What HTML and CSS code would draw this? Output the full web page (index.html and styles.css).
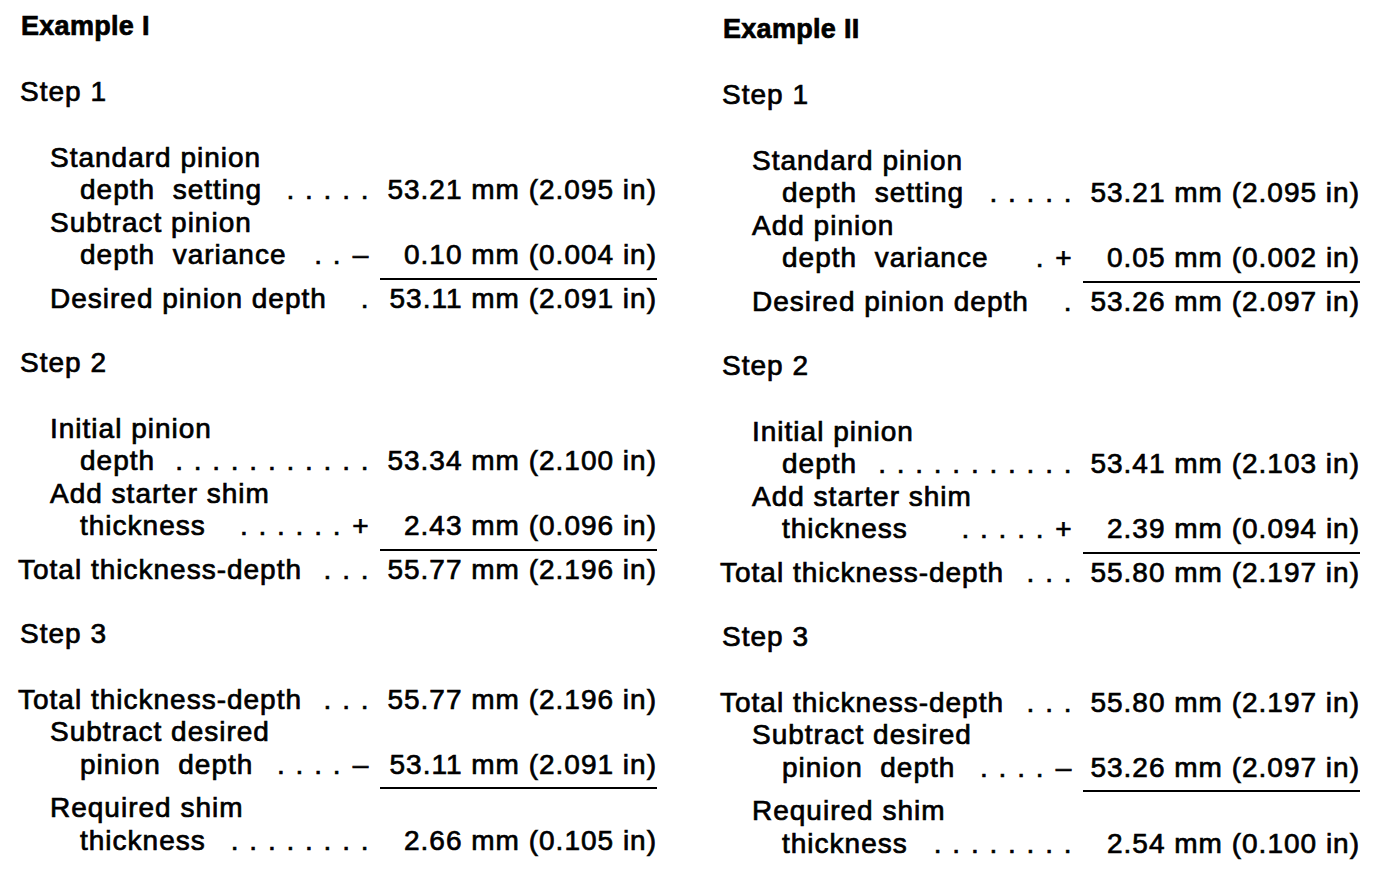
FILE: index.html
```html
<!DOCTYPE html>
<html lang="en">
<head>
<meta charset="utf-8">
<title>Pinion depth examples</title>
<link rel="stylesheet" href="styles.css">
</head>
<body>
<main class="page">
  <section class="example">
    <h1 class="ex-title">Example I</h1>

    <div class="step">
      <h2 class="step-title">Step 1</h2>
      <div class="row"><span class="label i1">Standard pinion</span></div>
      <div class="row"><span class="label span i2"><span class="txt">depth&nbsp; setting</span><span class="dots">. . . . .</span></span><span class="val">53.21 mm (2.095 in)</span></div>
      <div class="row"><span class="label i1">Subtract pinion</span></div>
      <div class="row ruled"><span class="label i2"><span class="txt">depth&nbsp; variance</span><span class="dots">. .</span></span><span class="op">–</span><span class="val">0.10 mm (0.004 in)</span></div>
      <div class="row"><span class="label span i1"><span class="txt">Desired pinion depth</span><span class="dots">.</span></span><span class="val">53.11 mm (2.091 in)</span></div>
    </div>

    <div class="step">
      <h2 class="step-title">Step 2</h2>
      <div class="row"><span class="label i1">Initial pinion</span></div>
      <div class="row"><span class="label span i2"><span class="txt">depth</span><span class="dots">. . . . . . . . . . .</span></span><span class="val">53.34 mm (2.100 in)</span></div>
      <div class="row"><span class="label i1">Add starter shim</span></div>
      <div class="row ruled"><span class="label i2"><span class="txt">thickness</span><span class="dots">. . . . . .</span></span><span class="op">+</span><span class="val">2.43 mm (0.096 in)</span></div>
      <div class="row"><span class="label span"><span class="txt">Total thickness-depth</span><span class="dots">. . .</span></span><span class="val">55.77 mm (2.196 in)</span></div>
    </div>

    <div class="step">
      <h2 class="step-title">Step 3</h2>
      <div class="row"><span class="label span"><span class="txt">Total thickness-depth</span><span class="dots">. . .</span></span><span class="val">55.77 mm (2.196 in)</span></div>
      <div class="row"><span class="label i1">Subtract desired</span></div>
      <div class="row ruled"><span class="label i2"><span class="txt">pinion&nbsp; depth</span><span class="dots">. . . .</span></span><span class="op">–</span><span class="val">53.11 mm (2.091 in)</span></div>
      <div class="row"><span class="label i1">Required shim</span></div>
      <div class="row"><span class="label span i2"><span class="txt">thickness</span><span class="dots">. . . . . . . .</span></span><span class="val">2.66 mm (0.105 in)</span></div>
    </div>
  </section>

  <section class="example second">
    <h1 class="ex-title">Example II</h1>

    <div class="step">
      <h2 class="step-title">Step 1</h2>
      <div class="row"><span class="label i1">Standard pinion</span></div>
      <div class="row"><span class="label span i2"><span class="txt">depth&nbsp; setting</span><span class="dots">. . . . .</span></span><span class="val">53.21 mm (2.095 in)</span></div>
      <div class="row"><span class="label i1">Add pinion</span></div>
      <div class="row ruled"><span class="label i2"><span class="txt">depth&nbsp; variance</span><span class="dots">.</span></span><span class="op">+</span><span class="val">0.05 mm (0.002 in)</span></div>
      <div class="row"><span class="label span i1"><span class="txt">Desired pinion depth</span><span class="dots">.</span></span><span class="val">53.26 mm (2.097 in)</span></div>
    </div>

    <div class="step">
      <h2 class="step-title">Step 2</h2>
      <div class="row"><span class="label i1">Initial pinion</span></div>
      <div class="row"><span class="label span i2"><span class="txt">depth</span><span class="dots">. . . . . . . . . . .</span></span><span class="val">53.41 mm (2.103 in)</span></div>
      <div class="row"><span class="label i1">Add starter shim</span></div>
      <div class="row ruled"><span class="label i2"><span class="txt">thickness</span><span class="dots">. . . . .</span></span><span class="op">+</span><span class="val">2.39 mm (0.094 in)</span></div>
      <div class="row"><span class="label span"><span class="txt">Total thickness-depth</span><span class="dots">. . .</span></span><span class="val">55.80 mm (2.197 in)</span></div>
    </div>

    <div class="step">
      <h2 class="step-title">Step 3</h2>
      <div class="row"><span class="label span"><span class="txt">Total thickness-depth</span><span class="dots">. . .</span></span><span class="val">55.80 mm (2.197 in)</span></div>
      <div class="row"><span class="label i1">Subtract desired</span></div>
      <div class="row ruled"><span class="label i2"><span class="txt">pinion&nbsp; depth</span><span class="dots">. . . .</span></span><span class="op">–</span><span class="val">53.26 mm (2.097 in)</span></div>
      <div class="row"><span class="label i1">Required shim</span></div>
      <div class="row"><span class="label span i2"><span class="txt">thickness</span><span class="dots">. . . . . . . .</span></span><span class="val">2.54 mm (0.100 in)</span></div>
    </div>
  </section>
</main>
</body>
</html>
```

FILE: styles.css
```css
html, body {
  margin: 0;
  padding: 0;
  background: #ffffff;
}

body {
  color: #000000;
  font-family: "Liberation Sans", Arial, Helvetica, sans-serif;
  font-size: 28px;
  -webkit-text-stroke: 0.7px #000000;
}

.page {
  display: grid;
  grid-template-columns: 639px 640px;
  column-gap: 63px;
  padding-left: 18px;
  padding-top: 10px;
}

.example.second {
  padding-top: 3px;
}

.ex-title {
  margin: 0 0 33px 3px;
  font-size: 27px;
  font-weight: 700;
  line-height: 33px;
  letter-spacing: 0.3px;
}

.step + .step {
  margin-top: 32px;
}

.step-title {
  margin: 0 0 33px 2px;
  font-size: 28px;
  font-weight: 400;
  line-height: 32.5px;
  letter-spacing: 1px;
}

.row {
  display: grid;
  grid-template-columns: 1fr 38px 277px;
  align-items: start;
  line-height: 32.5px;
  letter-spacing: 1px;
  white-space: nowrap;
}

.label {
  grid-column: 1 / 2;
  display: flex;
  min-width: 0;
}

.label.span {
  grid-column: 1 / 3;
  padding-right: 10px;
}

.label.i1 {
  padding-left: 32px;
}

.label.i2 {
  padding-left: 62px;
}

.dots {
  margin-left: auto;
  letter-spacing: 1.5px;
}

.op {
  grid-column: 2 / 3;
  text-align: center;
}

.val {
  grid-column: 3 / 4;
  text-align: right;
}

.row.ruled {
  margin-bottom: 3px;
}

.row.ruled .val {
  padding-bottom: 6px;
  border-bottom: 2px solid #000000;
}
```
